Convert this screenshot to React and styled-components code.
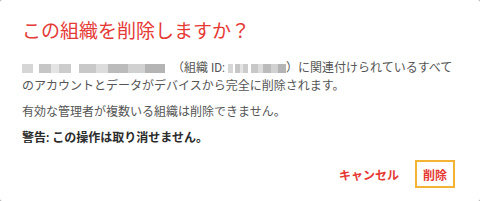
import React from "react";
import styled, { createGlobalStyle } from "styled-components";

const Global = createGlobalStyle`
  html, body {
    margin: 0;
    padding: 0;
    background: #9e9e9e;
  }
  body {
    font-family: Roboto, "Noto Sans CJK JP", sans-serif;
  }
`;

const Dialog = styled.div`
  box-sizing: border-box;
  width: 480px;
  height: 201px;
  background: #ffffff;
  border-radius: 2px;
  padding: 20px 22px 0 22px;
  display: flex;
  flex-direction: column;
`;

const Title = styled.h2`
  margin: 0;
  font-size: 19px;
  line-height: 24px;
  font-weight: 400;
  color: #e53935;
`;

const Content = styled.div`
  margin-top: 15px;
  display: flex;
  flex-direction: column;
  gap: 8px;
  font-size: 12px;
  line-height: 18px;
  color: #555555;
`;

const Para = styled.p`
  margin: 0;
  font-weight: ${props => (props.bold ? 700 : 400)};
  color: ${props => (props.bold ? "#2b2b2b" : "#555555")};
`;

/* redacted text, drawn as pixelated grey blocks */
const Redacted = styled.span`
  display: inline-block;
  width: ${props => props.w}px;
  height: 9px;
  margin-right: ${props => props.gap || 0}px;
  vertical-align: -1px;
  background: linear-gradient(
    90deg,
    #cfcfcf 0 8%,
    #ffffff 8% 12%,
    #bdbdbd 12% 20%,
    #e0e0e0 20% 26%,
    #c4c4c4 26% 34%,
    #ffffff 34% 40%,
    #bfbfbf 40% 52%,
    #d6d6d6 52% 60%,
    #b0b0b0 60% 74%,
    #c9c9c9 74% 86%,
    #a8a8a8 86% 100%
  );
  filter: blur(0.6px);
  opacity: 0.85;
`;

const Actions = styled.div`
  margin-top: auto;
  margin-bottom: 13px;
  display: flex;
  justify-content: flex-end;
  align-items: center;
  gap: 14px;
  padding-right: 3px;
`;

const Button = styled.button`
  box-sizing: border-box;
  height: 28px;
  padding: 0 ${props => (props.focused ? "6px" : "0")};
  background: transparent;
  border: 2px solid ${props => (props.focused ? "#f5b335" : "transparent")};
  font-family: inherit;
  font-size: 12px;
  font-weight: 700;
  color: #e53935;
  cursor: pointer;
`;

export default function App() {
  return (
    <>
      <Global />
      <Dialog>
        <Title>この組織を削除しますか？</Title>
        <Content>
          <Para>
            <Redacted w={143} gap={7} />
            （組織 ID: <Redacted w={58} />）に関連付けられているすべてのアカウントとデータがデバイスから完全に削除されます。
          </Para>
          <Para>有効な管理者が複数いる組織は削除できません。</Para>
          <Para bold>警告: この操作は取り消せません。</Para>
        </Content>
        <Actions>
          <Button>キャンセル</Button>
          <Button focused>削除</Button>
        </Actions>
      </Dialog>
    </>
  );
}
